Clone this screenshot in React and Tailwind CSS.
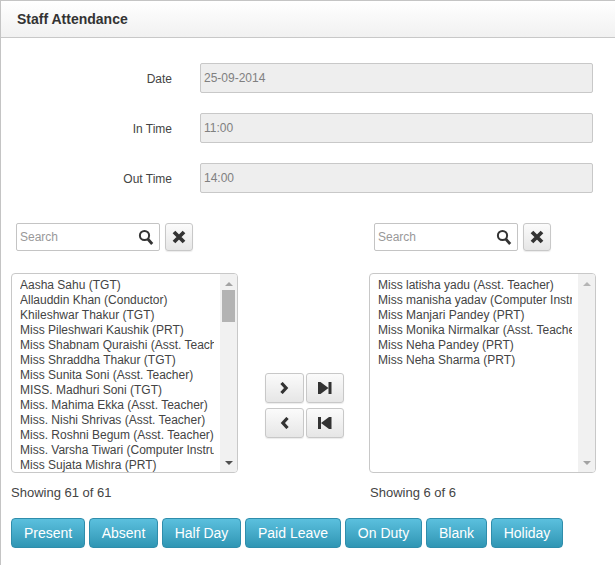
import React from 'react';

const leftStaff = [
  'Aasha Sahu (TGT)',
  'Allauddin Khan (Conductor)',
  'Khileshwar Thakur (TGT)',
  'Miss Pileshwari Kaushik (PRT)',
  'Miss Shabnam Quraishi (Asst. Teacher)',
  'Miss Shraddha Thakur (TGT)',
  'Miss Sunita Soni (Asst. Teacher)',
  'MISS. Madhuri Soni (TGT)',
  'Miss. Mahima Ekka (Asst. Teacher)',
  'Miss. Nishi Shrivas (Asst. Teacher)',
  'Miss. Roshni Begum (Asst. Teacher)',
  'Miss. Varsha Tiwari (Computer Instructor)',
  'Miss Sujata Mishra (PRT)',
];

const rightStaff = [
  'Miss latisha yadu (Asst. Teacher)',
  'Miss manisha yadav (Computer Instructor)',
  'Miss Manjari Pandey (PRT)',
  'Miss Monika Nirmalkar (Asst. Teacher)',
  'Miss Neha Pandey (PRT)',
  'Miss Neha Sharma (PRT)',
];

const statuses = [
  { label: 'Present', width: 'w-[74px]' },
  { label: 'Absent', width: 'w-[69px]' },
  { label: 'Half Day', width: 'w-[79px]' },
  { label: 'Paid Leave', width: 'w-[96px]' },
  { label: 'On Duty', width: 'w-[77px]' },
  { label: 'Blank', width: 'w-[61px]' },
  { label: 'Holiday', width: 'w-[72px]' },
];

const ICON_COLOR = '#333333';

const SearchIcon = () => (
  <svg width="16" height="16" viewBox="0 0 16 16" fill="none" stroke={ICON_COLOR}>
    <circle cx="6.5" cy="6.5" r="4.6" strokeWidth="2" />
    <path d="M9.8 10l4.4 5" strokeWidth="2.8" />
  </svg>
);

const CloseIcon = () => (
  <svg width="14" height="14" viewBox="0 0 14 14" fill="none" stroke={ICON_COLOR}>
    <path d="M2 2l10 10M12 2L2 12" strokeWidth="3.8" />
  </svg>
);

const ChevronRightIcon = () => (
  <svg width="10" height="12" viewBox="0 0 10 12" fill="none" stroke={ICON_COLOR}>
    <path d="M1.5 1l4.6 5-4.6 5" strokeWidth="3.2" />
  </svg>
);

const ChevronLeftIcon = () => (
  <svg width="10" height="12" viewBox="0 0 10 12" fill="none" stroke={ICON_COLOR}>
    <path d="M7.5 1L2.9 6l4.6 5" strokeWidth="3.2" />
  </svg>
);

const StepForwardIcon = () => (
  <svg width="14" height="12" viewBox="0 0 14 12" fill={ICON_COLOR}>
    <path d="M0 0h2.5v12H0zM2.5 0l8 6-8 6zM10.5 0H13.5v12h-3z" />
  </svg>
);

const StepBackIcon = () => (
  <svg width="14" height="12" viewBox="0 0 14 12" fill={ICON_COLOR}>
    <path d="M0 0h3v12H0zM11 0l-8 6 8 6zM11 0h2.5v12H11z" />
  </svg>
);

const GrayButton = ({ children, className }) => (
  <button className={`flex items-center justify-center rounded-[3px] border border-[#c8c8c8] bg-gradient-to-b from-[#fbfbfb] to-[#e6e6e6] shadow-[0_1px_1px_rgba(0,0,0,0.08)] ${className}`}>
    {children}
  </button>
);

const SearchBox = () => (
  <div className="flex items-center gap-[5px]">
    <div className="flex h-[28px] w-[144px] items-center justify-between rounded-[2px] border border-[#c4c4c4] bg-white pl-[3px] pr-[5px]">
      <span className="text-[12px] text-[#999999]">Search</span>
      <SearchIcon />
    </div>
    <GrayButton className="h-[28px] w-[28px]">
      <CloseIcon />
    </GrayButton>
  </div>
);

const ArrowDown = ({ color }) => (
  <div className="h-0 w-0 border-x-[4px] border-t-[4px] border-x-transparent" style={{ borderTopColor: color }} />
);

const ListBox = ({ items, thumb }) => (
  <div className="flex h-[200px] w-[227px] overflow-hidden rounded-[4px] border border-[#c8c8c8] bg-white">
    <div className="min-w-0 flex-1 overflow-hidden py-[4px] pl-[8px] pr-[6px]">
      {items.map((name) => (
        <div key={name} className="h-[15px] overflow-hidden whitespace-nowrap text-[12px] leading-[15px]">
          {name}
        </div>
      ))}
    </div>
    <div className="flex w-[17px] shrink-0 flex-col items-center bg-[#f1f1f1] pb-[7px] pt-[8px]">
      <div className={`h-0 w-0 border-x-[4px] border-b-[4px] border-x-transparent ${thumb ? 'border-b-[#a3a3a3]' : 'border-b-[#b5b5b5]'}`} />
      {thumb ? <div className="mt-[4px] h-[32px] w-[13px] bg-[#b3b3b3]" /> : null}
      <div className="flex-1" />
      <ArrowDown color={thumb ? '#505050' : '#a3a3a3'} />
    </div>
  </div>
);

const Field = ({ label, value }) => (
  <div className="flex items-center">
    <label className="w-[171px] pt-[2px] text-right text-[12px]">{label}</label>
    <div className="ml-[28px] flex h-[30px] w-[393px] items-center rounded-[2px] border border-[#c8c8c8] bg-[#eeeeee] pl-[3px] text-[12px] text-[#808080]">
      {value}
    </div>
  </div>
);

export default function App() {
  return (
    <div className="h-[565px] w-[615px] overflow-hidden border-l border-t border-[#c4c4c4] bg-white font-['Liberation_Sans',Arial,sans-serif] text-[#444444]">
      {/* Header */}
      <div className="flex h-[37px] items-center border-b border-[#c8c8c8] bg-gradient-to-b from-white to-[#f1f1f1] pl-[16px]">
        <h1 className="text-[14px] font-bold text-[#333333]">Staff Attendance</h1>
      </div>

      {/* Form */}
      <div className="flex flex-col gap-[20px] pt-[25px]">
        <Field label="Date" value="25-09-2014" />
        <Field label="In Time" value="11:00" />
        <Field label="Out Time" value="14:00" />
      </div>

      {/* Search row */}
      <div className="mt-[30px] flex pl-[15px]">
        <SearchBox />
        <div className="ml-[181px]">
          <SearchBox />
        </div>
      </div>

      {/* Dual list */}
      <div className="mt-[22px] flex items-start pl-[10px]">
        <ListBox items={leftStaff} thumb />
        <div className="ml-[27px] mr-[25px] mt-[100px] grid w-[79px] grid-cols-[39px_38px] gap-x-[2px] gap-y-[5px]">
          <GrayButton className="h-[30px]"><ChevronRightIcon /></GrayButton>
          <GrayButton className="h-[30px]"><StepForwardIcon /></GrayButton>
          <GrayButton className="h-[30px]"><ChevronLeftIcon /></GrayButton>
          <GrayButton className="h-[30px]"><StepBackIcon /></GrayButton>
        </div>
        <ListBox items={rightStaff} />
      </div>

      <div className="mt-[11px] flex pl-[10px] text-[13px] leading-[17px]">
        <span className="w-[359px]">Showing 61 of 61</span>
        <span>Showing 6 of 6</span>
      </div>

      {/* Status buttons */}
      <div className="mt-[17px] flex gap-[4px] pl-[10px]">
        {statuses.map((s) => (
          <button
            key={s.label}
            className={`h-[30px] rounded-[4px] border border-[#2f8dab] bg-gradient-to-b from-[#5bc0de] to-[#2f96b4] pt-[1px] text-[14px] text-white ${s.width}`}
          >
            {s.label}
          </button>
        ))}
      </div>
    </div>
  );
}
